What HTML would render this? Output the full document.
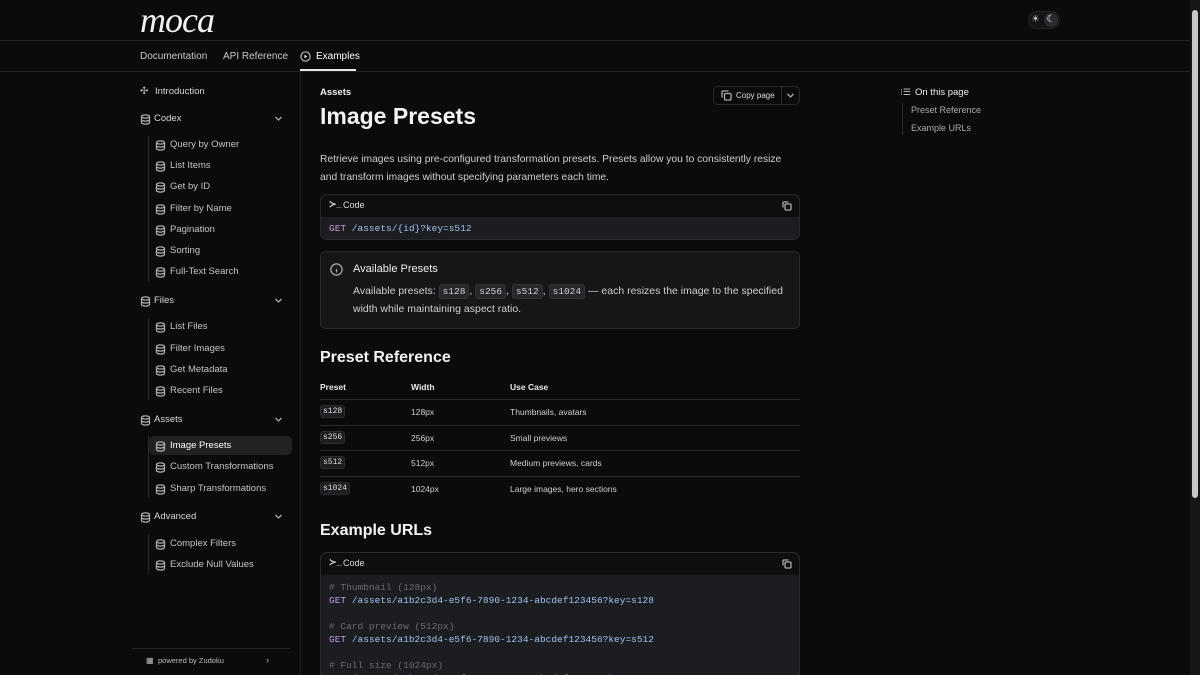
<!DOCTYPE html>
<html style="overflow:hidden;height:675px"><head><meta charset="utf-8"><style>
*{margin:0;padding:0;box-sizing:border-box}
body{width:1200px;height:675px;overflow:hidden;background:#0b0b0d;color:#e8e8ea;font-family:"Liberation Sans",sans-serif;position:relative}
.a{position:absolute;white-space:nowrap}
.mono{font-family:"Liberation Mono",monospace}
.hl{position:absolute;left:0;width:1190px;height:1px;background:#232326}
.nav{font-size:10px;color:#c8c8cc}
.sb{font-size:9.5px;color:#c4c4c8}
.top{font-size:9.5px;color:#d6d6da}
svg{position:absolute}
.ic{stroke:#aaa;fill:none;stroke-width:1.3}
.code{position:absolute;left:320px;width:480px;border:1px solid #2a2a2e;border-radius:7px;overflow:hidden;background:#1c1d21}
.code .h{height:22px;background:#0e0e10;font-size:9px;color:#ddd;padding:5px 0 0 22px;position:relative}
.tk{background:#26272b;border:1px solid #333;border-radius:3px;padding:1px 3px;font-family:"Liberation Mono",monospace;font-size:9.5px}
.row{position:absolute;left:320px;width:480px;height:1px;background:#2a2a2e}
.td{font-size:8.5px;color:#cfcfd3}
</style></head><body>
<!-- header -->
<div class="a" style="left:140px;top:-1px;font-family:'Liberation Serif',serif;font-style:italic;font-size:36px;color:#f2f2f2;letter-spacing:-1px">moca</div>
<div class="a" style="left:1028px;top:11px;width:32px;height:18px;border-radius:9px;background:#141416;border:1px solid #222"></div>
<div class="a" style="left:1031px;top:14px;font-size:10px;color:#ccc">☀</div>
<div class="a" style="left:1044px;top:13px;width:14px;height:14px;border-radius:7px;background:#2b2b2f;color:#fff;font-size:10px;text-align:center;line-height:14px">☾</div>
<div class="hl" style="top:40px"></div>
<div class="a nav" style="left:140px;top:51px">Documentation</div>
<div class="a nav" style="left:223px;top:51px">API Reference</div>
<svg style="left:300px;top:51px" width="11" height="11"><circle cx="5.5" cy="5.5" r="4.6" class="ic" stroke="#ddd"/><path d="M4.4 3.6v3.8l3-1.9z" fill="#ddd"/></svg>
<div class="a nav" style="left:316px;top:51px;color:#fff">Examples</div>
<div class="a" style="left:300px;top:69px;width:56px;height:2px;background:#e8e8e8"></div>
<div class="hl" style="top:71px"></div>
<div class="a" style="left:300px;top:72px;width:1px;height:603px;background:#232326"></div>
<div class="a" style="left:1190px;top:0;width:10px;height:675px;background:#161618"></div>
<div class="a" style="left:1192px;top:10px;width:6px;height:488px;background:#c8c8c8;border-radius:3px"></div>

<!-- sidebar -->
<div class="a" style="left:149px;top:436px;width:143px;height:19px;border-radius:5px;background:#222225"></div>
<div class="a top" style="left:140px;top:86px;font-size:10px;color:#bbb">✣</div>
<div class="a top" style="left:155px;top:86px">Introduction</div>
<div id="sbx"></div>
<div class="a" style="left:148px;top:136px;width:1px;height:146px;background:#2a2a2e"></div>
<div class="a" style="left:148px;top:318px;width:1px;height:82px;background:#2a2a2e"></div>
<div class="a" style="left:148px;top:436px;width:1px;height:62px;background:#2a2a2e"></div>
<div class="a" style="left:148px;top:534px;width:1px;height:40px;background:#2a2a2e"></div>
<div class="a" style="left:132px;top:648px;width:158px;height:1px;background:#232326"></div>
<div class="a" style="left:146px;top:656px;font-size:8px;color:#bbb">▦</div>
<div class="a" style="left:158px;top:656px;font-size:7.5px;color:#bbb">powered by Zudoku</div>
<div class="a" style="left:266px;top:655px;font-size:9px;color:#bbb">›</div>

<!-- content -->
<div class="a" style="left:320px;top:87px;font-size:9.5px;font-weight:bold;color:#eee">Assets</div>
<div class="a" style="left:320px;top:103px;font-size:23px;font-weight:bold;color:#f4f4f4">Image Presets</div>
<div class="a" style="left:713px;top:86px;width:87px;height:19px;border:1px solid #2a2a2e;border-radius:5px"></div>
<div class="a" style="left:781px;top:86px;width:1px;height:19px;background:#2a2a2e"></div>
<svg style="left:721px;top:90px" width="11" height="11"><rect x="3.5" y="3.5" width="6.5" height="6.5" rx="1" class="ic" stroke="#ccc"/><path d="M1 7.5V2a1 1 0 0 1 1-1h5.5" class="ic" stroke="#ccc"/></svg>
<div class="a" style="left:736px;top:91px;font-size:8px;color:#ddd">Copy page</div>
<svg style="left:786px;top:92px" width="9" height="7"><path d="M1.5 2l3 3 3-3" class="ic" stroke="#ccc"/></svg>
<div class="a" style="left:320px;top:151px;font-size:10.3px;line-height:18px;color:#cfcfd3;white-space:normal;width:480px">Retrieve images using pre-configured transformation presets. Presets allow you to consistently resize and transform images without specifying parameters each time.</div>

<div class="code" style="top:194px;height:46px"><div class="h"><span class="a" style="left:8px;top:4px;font-weight:bold;font-size:9px">≻_</span>Code<svg style="right:7px;top:6px" width="10" height="10"><rect x="3" y="3" width="6" height="6" rx="1" class="ic" stroke="#bbb"/><path d="M1 6.5V2a1 1 0 0 1 1-1h4.5" class="ic" stroke="#bbb"/></svg></div>
<div class="mono" style="padding:6px 0 0 8px;font-size:9.5px;color:#9ec3ee"><span style="color:#c49bdc">GET</span> /assets/{id}?key=s512</div></div>

<div class="a" style="left:320px;top:251px;width:480px;height:78px;border:1px solid #2a2a2e;border-radius:6px;background:#161618"></div>
<svg style="left:330px;top:263px" width="13" height="13"><circle cx="6.5" cy="6.5" r="5.6" class="ic" stroke="#ddd"/><path d="M6.5 6v3.5M6.5 4v.3" class="ic" stroke="#ddd"/></svg>
<div class="a" style="left:353px;top:263px;font-size:11px;color:#eee">Available Presets</div>
<div class="a" style="left:353px;top:285px;font-size:10.5px;color:#cfcfd3">Available presets: <span class="tk">s128</span>, <span class="tk">s256</span>, <span class="tk">s512</span>, <span class="tk">s1024</span> — each resizes the image to the specified</div>
<div class="a" style="left:353px;top:303px;font-size:10.5px;color:#cfcfd3">width while maintaining aspect ratio.</div>

<div class="a" style="left:320px;top:349px;font-size:16px;font-weight:bold;color:#f4f4f4">Preset Reference</div>
<div class="a" style="left:320px;top:382px;font-size:8.5px;font-weight:bold">Preset</div>
<div class="a" style="left:411px;top:382px;font-size:8.5px;font-weight:bold">Width</div>
<div class="a" style="left:510px;top:382px;font-size:8.5px;font-weight:bold">Use Case</div>
<div class="row" style="top:399px"></div>
<div class="row" style="top:425px"></div>
<div class="row" style="top:450px"></div>
<div class="row" style="top:476px"></div>
<div id="tbl"></div>

<div class="a" style="left:320px;top:522px;font-size:16px;font-weight:bold;color:#f4f4f4">Example URLs</div>
<div class="code" style="top:552px;height:140px"><div class="h"><span class="a" style="left:8px;top:4px;font-weight:bold;font-size:9px">≻_</span>Code<svg style="right:7px;top:6px" width="10" height="10"><rect x="3" y="3" width="6" height="6" rx="1" class="ic" stroke="#bbb"/><path d="M1 6.5V2a1 1 0 0 1 1-1h4.5" class="ic" stroke="#bbb"/></svg></div>
<div class="mono" style="padding:6px 0 0 8px;font-size:9.5px;line-height:13px;color:#9ec3ee;white-space:pre"><span style="color:#6a6a70"># Thumbnail (128px)</span>
<span style="color:#c49bdc">GET</span> /assets/a1b2c3d4-e5f6-7890-1234-abcdef123456?key=s128

<span style="color:#6a6a70"># Card preview (512px)</span>
<span style="color:#c49bdc">GET</span> /assets/a1b2c3d4-e5f6-7890-1234-abcdef123456?key=s512

<span style="color:#6a6a70"># Full size (1024px)</span>
<span style="color:#c49bdc">GET</span> /assets/a1b2c3d4-e5f6-7890-1234-abcdef123456?key=s1024</div></div>

<!-- TOC -->
<div class="a" style="left:900px;top:87px;font-size:9px;color:#ccc">⁝☰</div>
<div class="a" style="left:915px;top:87px;font-size:9.5px;color:#eee">On this page</div>
<div class="a" style="left:902px;top:103px;width:1px;height:32px;background:#2a2a2e"></div>
<div class="a" style="left:911px;top:105px;font-size:9px;color:#aaa">Preset Reference</div>
<div class="a" style="left:911px;top:123px;font-size:9px;color:#aaa">Example URLs</div>

<script>
var db='<svg width="11" height="11" style="position:static"><ellipse cx="5.5" cy="2.5" rx="4" ry="1.6" class="ic" stroke="#bbb"/><path d="M1.5 2.5v6c0 .9 1.8 1.6 4 1.6s4-.7 4-1.6v-6M1.5 5.5c0 .9 1.8 1.6 4 1.6s4-.7 4-1.6" class="ic" stroke="#bbb"/></svg>';
var h='';
[['Codex',118],['Files',300],['Assets',419],['Advanced',516]].forEach(function(g){
h+='<div class="a" style="left:140px;top:'+(g[1]-6)+'px">'+db+'</div><div class="a top" style="left:154px;top:'+(g[1]-5)+'px">'+g[0]+'</div><svg style="left:274px;top:'+(g[1]-3)+'px" width="9" height="7"><path d="M1.5 2l3 3 3-3" class="ic" stroke="#bbb"/></svg>';});
[['Query by Owner',144],['List Items',165],['Get by ID',186],['Filter by Name',208],['Pagination',229],['Sorting',250],['Full-Text Search',271],['List Files',326],['Filter Images',348],['Get Metadata',369],['Recent Files',390],['Image Presets',445],['Custom Transformations',466],['Sharp Transformations',488],['Complex Filters',543],['Exclude Null Values',564]].forEach(function(s){
h+='<div class="a" style="left:155px;top:'+(s[1]-6)+'px">'+db+'</div><div class="a sb" style="left:170px;top:'+(s[1]-5)+'px'+(s[0]=='Image Presets'?';color:#fff':'')+'">'+s[0]+'</div>';});
document.getElementById('sbx').innerHTML=h;
var t='';
[['s128','128px','Thumbnails, avatars',412],['s256','256px','Small previews',438],['s512','512px','Medium previews, cards',463],['s1024','1024px','Large images, hero sections',489]].forEach(function(r){
t+='<div class="a" style="left:320px;top:'+(r[3]-7)+'px;background:#1e1e22;border:1px solid #2c2c30;border-radius:3px;padding:1px 2px;font-family:Liberation Mono,monospace;font-size:8px;color:#ddd">'+r[0]+'</div><div class="a td" style="left:411px;top:'+(r[3]-5)+'px">'+r[1]+'</div><div class="a td" style="left:510px;top:'+(r[3]-5)+'px">'+r[2]+'</div>';});
document.getElementById('tbl').innerHTML=t;
</script>
</body></html>
